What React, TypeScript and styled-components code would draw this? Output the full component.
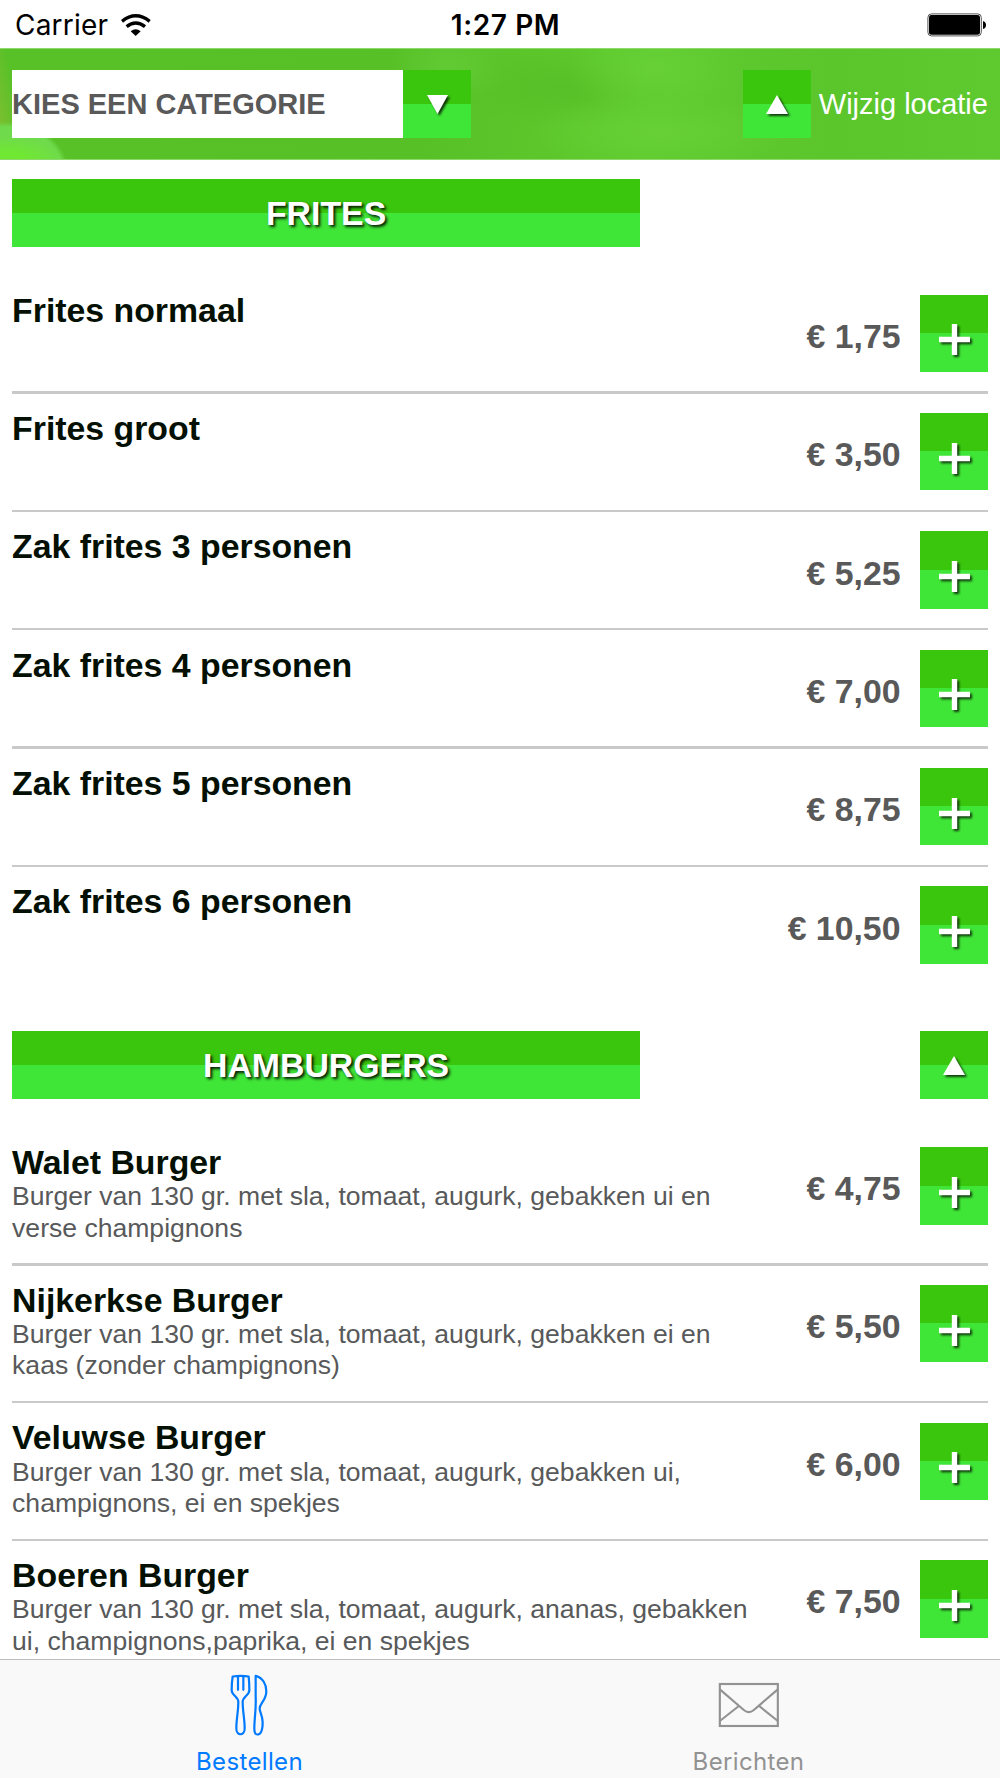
import React from "react";
import styled, { createGlobalStyle, css } from "styled-components";

/* One layout point on a 414pt wide screen drawn at 1000px. */
const pt = (n: number) => `${((n * 1000) / 414).toFixed(2)}px`;

const GlobalStyle = createGlobalStyle`
  *, *::before, *::after { box-sizing: border-box; }
  body { margin: 0; background: #fff; }
`;

const textFont = `"Liberation Sans", Arial, Helvetica, sans-serif`;
const systemFont = `Inter, "Liberation Sans", sans-serif`;

const twoTone = css`
  background: linear-gradient(to bottom, #39c60d 0 50%, #40e637 50% 100%);
`;

const Screen = styled.div`
  display: flex;
  flex-direction: column;
  width: 1000px;
  height: 1778px;
  overflow: hidden;
  background: #fff;
  font-family: ${textFont};
`;

const StatusBar = styled.header`
  flex: none;
  display: grid;
  grid-template-columns: 1fr auto 1fr;
  align-items: center;
  height: 48px;
  padding: 2px 13px 0 15px;
  font-family: ${systemFont};
  font-size: 28px;
  color: #000;
`;

const Carrier = styled.div`
  display: flex;
  align-items: center;
  gap: 13px;
  letter-spacing: 0.2px;
`;

const Clock = styled.div`
  padding-left: 9px;
  font-weight: 600;
  letter-spacing: 0.6px;
`;

const BatterySlot = styled.div`
  display: flex;
  justify-content: flex-end;
`;

const Toolbar = styled.div`
  flex: none;
  display: flex;
  align-items: center;
  justify-content: space-between;
  height: 112px;
  padding: 0 ${pt(5)};
  box-shadow: inset 0 1px #8fd86d, inset 0 -1px #8fd86d;
  background:
    radial-gradient(ellipse 56px 24px at 8px 112px, #70e832 0 30%, #70e83200 100%),
    radial-gradient(ellipse 62px 48px at 6px 122px, #6fda4c 0 90%, #6fda4c00 100%),
    linear-gradient(76deg, #7cbf30 0, #7cbf30 8px, #7cbf3000 32px),
    radial-gradient(ellipse 90px 50px at 655px 20px, #66d036, #66d03600),
    radial-gradient(ellipse 130px 40px at 660px 85px, #66d036, #66d03600),
    radial-gradient(ellipse 60px 40px at 450px 18px, #62ca33, #62ca3300),
    radial-gradient(ellipse 110px 40px at 560px 40px, #57bf28, #57bf2800),
    linear-gradient(to right, #58c128 0, #58c027 42%, #5fcb2e 64%, #5bc52c 84%, #5eca30 100%);
`;

const CategoryPicker = styled.div`
  display: flex;
  align-items: stretch;
  height: ${pt(28)};
`;

const CategoryField = styled.div`
  display: flex;
  align-items: center;
  width: ${pt(162)};
  padding-top: 1px;
  background: #fff;
  color: #595959;
  font-size: ${pt(12)};
  font-weight: bold;
`;

const LocationLink = styled.div`
  display: flex;
  align-items: center;
  gap: 8px;
  color: #fff;
  font-size: ${pt(12)};
  white-space: nowrap;
`;

const LocationLabel = styled.span`
  padding-top: 1px;
`;

const IconButton = styled.button<{ $tall?: boolean }>`
  ${twoTone}
  flex: none;
  display: flex;
  align-items: center;
  justify-content: center;
  width: ${pt(28)};
  height: ${({ $tall }) => pt($tall ? 32 : 28)};
  padding: ${({ $tall }) => ($tall ? "13px 0 0" : "1px 0 0")};
  border: 0;

  svg {
    overflow: visible;
    filter: drop-shadow(2px 2px 1.2px rgba(0, 0, 0, 0.75));
  }
`;

const Menu = styled.main`
  flex: 1;
  min-height: 0;
  overflow: hidden;
  padding: 18.9px ${pt(5)} 0;
`;

const Section = styled.section`
  margin-bottom: ${pt(20)};
`;

const SectionHead = styled.div`
  display: flex;
  justify-content: space-between;
  margin-bottom: ${pt(20)};
`;

const SectionTitle = styled.h2`
  ${twoTone}
  display: flex;
  align-items: center;
  justify-content: center;
  width: ${pt(260)};
  height: ${pt(28)};
  margin: 0;
  padding-top: 0.6px;
  color: #fff;
  font-size: ${pt(14)};
  text-shadow: 2px 2px 3px rgba(0, 0, 0, 0.9);
`;

const Item = styled.article<{ $tall: boolean }>`
  display: flex;
  align-items: flex-start;
  height: ${({ $tall }) => pt($tall ? 48 : 40)};
`;

const ItemText = styled.div`
  width: 750px;
  margin-top: -1.3px;
`;

const ItemName = styled.h3`
  margin: 0;
  color: #031003;
  font-size: ${pt(14)};
  line-height: ${pt(14)};
`;

const ItemDescription = styled.p`
  margin: 1.4px 0 0;
  color: #58595a;
  font-size: ${pt(11)};
  line-height: 31.6px;
`;

const Price = styled.div`
  display: flex;
  flex: 1;
  align-items: center;
  justify-content: flex-end;
  height: ${pt(32)};
  padding: 6px 19.8px 0 0;
  color: #595959;
  font-size: ${pt(14)};
  font-weight: bold;
  white-space: nowrap;
`;

const Divider = styled.div`
  height: ${pt(1)};
  margin-bottom: ${pt(8)};
  background: #c9c9c9;
`;

const TabBar = styled.nav`
  flex: none;
  display: flex;
  height: 119px;
  padding-right: 2px;
  border-top: 1px solid #bdbdbd;
  background: #f9f9f9;
`;

const Tab = styled.div<{ $active?: boolean }>`
  flex: 1;
  display: flex;
  flex-direction: column;
  align-items: center;
  color: ${({ $active }) => ($active ? "#007aff" : "#929292")};
  font-family: ${systemFont};
  font-size: 24px;
  line-height: 30px;
  letter-spacing: 0.35px;
`;

const TabIcon = styled.div`
  display: flex;
  align-items: center;
  justify-content: center;
  height: 90px;
  margin-bottom: -3px;
`;

const Wifi = () => (
  <svg width="30" height="22" viewBox="363 38 90 66" fill="none" stroke="#000" strokeWidth="10">
    <path d="M366 60Q407 27 449 60" />
    <path d="M380 76Q407 54 435 76" />
    <path d="M392 90Q407 77 422 90L407 104Z" fill="#000" stroke="none" />
  </svg>
);

const Battery = () => (
  <svg width="60" height="24" viewBox="0 0 60 24">
    <rect x="0.9" y="0.9" width="53.4" height="22" rx="3.6" fill="#fff" stroke="#555" strokeWidth="1" />
    <rect x="2" y="2" width="51" height="19.8" rx="2.4" />
    <path d="M56 8Q59 9 59 12T56 16Z" />
  </svg>
);

const TriangleDown = () => (
  <svg width="21" height="19" viewBox="0 0 21 19" fill="#fff">
    <path d="M0 0H21L10.5 19Z" />
  </svg>
);

const TriangleUp = () => (
  <svg width="22" height="19" viewBox="0 0 22 19" fill="#fff">
    <path d="M0 19H22L11 0Z" />
  </svg>
);

const Plus = () => (
  <svg width="31" height="31" viewBox="0 0 31 31" stroke="#fff" strokeWidth="5.4">
    <path d="M15.5 0V31M0 15.5H31" />
  </svg>
);

const Cutlery = () => (
  <svg
    width="38.33"
    height="63.33"
    viewBox="91 53.5 115 190"
    fill="none"
    stroke="currentColor"
    strokeWidth="6.6"
    strokeLinejoin="round"
    strokeLinecap="round"
  >
    <path d="M99 64Q123 60 147 64Q149 82 149 105C149 120 129 125 129 140C129 170 135 190 135 220C135 243 110 243 110 220C110 190 116 170 116 140C116 125 96 120 96 105Q96 82 99 64Z" />
    <path d="M115 64V104M131 64V104" />
    <path d="M168 62C190 68 200 88 200 108C200 135 180 145 180 160C180 172 189 180 189 202C189 225 183 238 173 238C166 238 164 230 164 219C164 190 170 160 168 125Z" />
  </svg>
);

const Envelope = () => (
  <svg width="61.33" height="45.33" viewBox="654.5 546 184 136" fill="none" stroke="currentColor" strokeWidth="6.4">
    <rect x="660" y="552" width="174" height="126" />
    <path d="M660 568L732 630Q747 643 762 630L834 568M660 663L717 618M834 663L778 618" />
  </svg>
);

type MenuItem = { name: string; price: string; description?: string };

const frites: MenuItem[] = [
  { name: "Frites normaal", price: "€ 1,75" },
  { name: "Frites groot", price: "€ 3,50" },
  { name: "Zak frites 3 personen", price: "€ 5,25" },
  { name: "Zak frites 4 personen", price: "€ 7,00" },
  { name: "Zak frites 5 personen", price: "€ 8,75" },
  { name: "Zak frites 6 personen", price: "€ 10,50" },
];

const burgers: MenuItem[] = [
  {
    name: "Walet Burger",
    price: "€ 4,75",
    description: "Burger van 130 gr. met sla, tomaat, augurk, gebakken ui en verse champignons",
  },
  {
    name: "Nijkerkse Burger",
    price: "€ 5,50",
    description: "Burger van 130 gr. met sla, tomaat, augurk, gebakken ei en kaas (zonder champignons)",
  },
  {
    name: "Veluwse Burger",
    price: "€ 6,00",
    description: "Burger van 130 gr. met sla, tomaat, augurk, gebakken ui, champignons, ei en spekjes",
  },
  {
    name: "Boeren Burger",
    price: "€ 7,50",
    description:
      "Burger van 130 gr. met sla, tomaat, augurk, ananas, gebakken ui, champignons,paprika, ei en spekjes",
  },
];

const MenuSection = ({ title, items, backToTop }: { title: string; items: MenuItem[]; backToTop?: boolean }) => (
  <Section>
    <SectionHead>
      <SectionTitle>{title}</SectionTitle>
      {backToTop && (
        <IconButton>
          <TriangleUp />
        </IconButton>
      )}
    </SectionHead>
    {items.map((item, index) => (
      <React.Fragment key={item.name}>
        {index > 0 && <Divider />}
        <Item $tall={Boolean(item.description)}>
          <ItemText>
            <ItemName>{item.name}</ItemName>
            {item.description && <ItemDescription>{item.description}</ItemDescription>}
          </ItemText>
          <Price>{item.price}</Price>
          <IconButton $tall>
            <Plus />
          </IconButton>
        </Item>
      </React.Fragment>
    ))}
  </Section>
);

export default function App() {
  return (
    <Screen>
      <GlobalStyle />
      <StatusBar>
        <Carrier>
          <span>Carrier</span>
          <Wifi />
        </Carrier>
        <Clock>1:27 PM</Clock>
        <BatterySlot>
          <Battery />
        </BatterySlot>
      </StatusBar>
      <Toolbar>
        <CategoryPicker>
          <CategoryField>KIES EEN CATEGORIE</CategoryField>
          <IconButton>
            <TriangleDown />
          </IconButton>
        </CategoryPicker>
        <LocationLink>
          <IconButton>
            <TriangleUp />
          </IconButton>
          <LocationLabel>Wijzig locatie</LocationLabel>
        </LocationLink>
      </Toolbar>
      <Menu>
        <MenuSection title="FRITES" items={frites} />
        <MenuSection title="HAMBURGERS" items={burgers} backToTop />
      </Menu>
      <TabBar>
        <Tab $active>
          <TabIcon>
            <Cutlery />
          </TabIcon>
          Bestellen
        </Tab>
        <Tab>
          <TabIcon>
            <Envelope />
          </TabIcon>
          Berichten
        </Tab>
      </TabBar>
    </Screen>
  );
}
